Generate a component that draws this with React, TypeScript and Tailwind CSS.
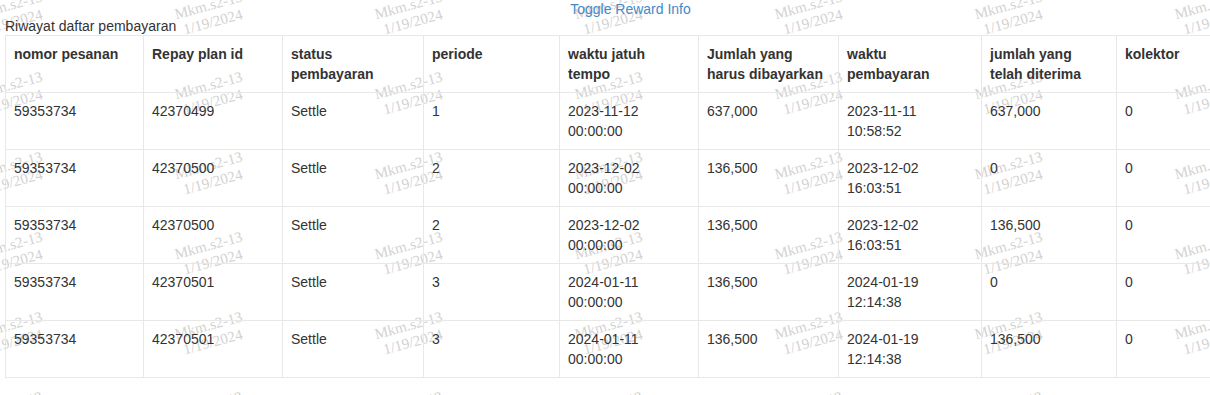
import React from "react";

const headers: string[][] = [
  ["nomor pesanan"],
  ["Repay plan id"],
  ["status", "pembayaran"],
  ["periode"],
  ["waktu jatuh", "tempo"],
  ["Jumlah yang", "harus dibayarkan"],
  ["waktu", "pembayaran"],
  ["jumlah yang", "telah diterima"],
  ["kolektor"],
];

const rows: string[][][] = [
  [["59353734"], ["42370499"], ["Settle"], ["1"], ["2023-11-12", "00:00:00"], ["637,000"], ["2023-11-11", "10:58:52"], ["637,000"], ["0"]],
  [["59353734"], ["42370500"], ["Settle"], ["2"], ["2023-12-02", "00:00:00"], ["136,500"], ["2023-12-02", "16:03:51"], ["0"], ["0"]],
  [["59353734"], ["42370500"], ["Settle"], ["2"], ["2023-12-02", "00:00:00"], ["136,500"], ["2023-12-02", "16:03:51"], ["136,500"], ["0"]],
  [["59353734"], ["42370501"], ["Settle"], ["3"], ["2024-01-11", "00:00:00"], ["136,500"], ["2024-01-19", "12:14:38"], ["0"], ["0"]],
  [["59353734"], ["42370501"], ["Settle"], ["3"], ["2024-01-11", "00:00:00"], ["136,500"], ["2024-01-19", "12:14:38"], ["136,500"], ["0"]],
];

const Cell = ({ lines, bold }: { lines: string[]; bold?: boolean }) => (
  <div className={`h-[57px] px-2 py-2 leading-5 border-r border-b border-[#e8e8e8] ${bold ? "font-bold" : ""}`}>
    {lines.map((l, i) => (
      <div key={i} className="whitespace-nowrap">
        {l}
      </div>
    ))}
  </div>
);

const Watermark = () => (
  <div className="pointer-events-none absolute left-[-89px] top-[-26px] grid grid-cols-[repeat(8,200px)] auto-rows-[80px]">
    {Array.from({ length: 48 }).map((_, i) => (
      <div key={i} className="flex items-center justify-center">
        <div className="-rotate-[15deg] text-center font-['Liberation_Serif','Times_New_Roman',serif] text-[15px] leading-[17px] text-[#d2d2d2]">
          <div>Mkm.s2-13</div>
          <div>1/19/2024</div>
        </div>
      </div>
    ))}
  </div>
);

export default function App() {
  return (
    <div className="relative w-[1210px] h-[395px] overflow-hidden bg-white font-['Liberation_Sans',Arial,sans-serif] text-[14px] text-[#333]">
      <Watermark />
      <div className="relative w-[1261px] px-[5px]">
        <div className="text-center leading-[18px]">
          <a className="text-[#428bca] cursor-pointer">Toggle Reward Info</a>
        </div>
        <div className="leading-[17px]">Riwayat daftar pembayaran</div>
        <div className="grid grid-cols-[138px_139px_141px_136px_139px_140px_143px_135px_140px] border-l border-t border-[#e8e8e8]">
          {headers.map((h, i) => (
            <Cell key={i} lines={h} bold />
          ))}
          {rows.map((r, ri) =>
            r.map((c, ci) => <Cell key={`${ri}-${ci}`} lines={c} />)
          )}
        </div>
      </div>
    </div>
  );
}
